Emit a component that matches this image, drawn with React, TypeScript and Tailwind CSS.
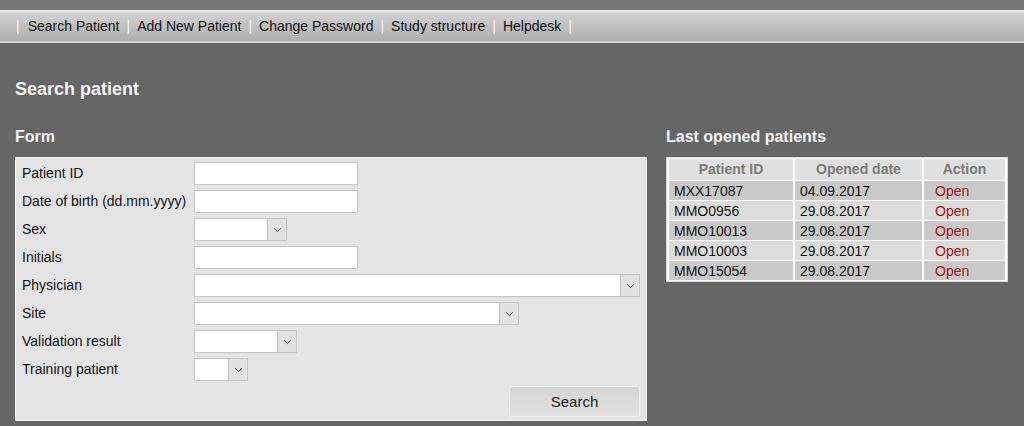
import { ReactNode } from "react";

const navItems = ["Search Patient", "Add New Patient", "Change Password", "Study structure", "Helpdesk"];

const recent = [
  { id: "MXX17087", date: "04.09.2017" },
  { id: "MMO0956", date: "29.08.2017" },
  { id: "MMO10013", date: "29.08.2017" },
  { id: "MMO10003", date: "29.08.2017" },
  { id: "MMO15054", date: "29.08.2017" },
];

function Chevron() {
  return (
    <svg width="9" height="6" viewBox="0 0 9 6" fill="none">
      <path d="M1 1.2 L4.5 4.6 L8 1.2" stroke="#555" strokeWidth="1" />
    </svg>
  );
}

function TextField({ width }: { width: string }) {
  return <div className={`h-[23px] ${width} bg-white border border-[#c6c6c6]`} />;
}

function SelectField({ width }: { width: string }) {
  return (
    <div className={`h-[23px] ${width} flex bg-white border border-[#c6c6c6]`}>
      <div className="flex-1" />
      <div className="w-[19px] flex items-center justify-center bg-[#e2e2e2] border-l border-[#bdbdbd]">
        <Chevron />
      </div>
    </div>
  );
}

function Row({ label, children }: { label: string; children: ReactNode }) {
  return (
    <div className="h-[28px] flex items-center pt-[1px]">
      <div className="w-[172px] shrink-0 text-[14px] text-[#111]">{label}</div>
      {children}
    </div>
  );
}

export default function App() {
  return (
    <div className="min-h-[426px] pt-[10px] font-['Liberation_Sans',Arial,sans-serif] bg-[linear-gradient(#777777_0,#777777_10px,#666666_10px)]">
      {/* Top nav */}
      <nav className="h-[33px] border-t-2 border-b-2 border-t-[#e9e9e9] border-b-[#d2d2d2] bg-[linear-gradient(#d3d3d3,#adadad)] flex items-center pl-[16px] text-[14px] text-[#111]">
        <span className="text-[#f4f4f4] mr-[8px]">|</span>
        {navItems.map((item) => (
          <span key={item} className="flex items-center">
            <span>{item}</span>
            <span className="text-[#f4f4f4] mx-[7px]">|</span>
          </span>
        ))}
      </nav>

      <div className="px-[15px]">
        <h1 className="text-[18px] font-bold text-[#f4f4f4] mt-[36px] leading-[20px]">Search patient</h1>

        <div className="flex gap-[19px] mt-[28px]">
          {/* Form */}
          <div className="w-[632px]">
            <h2 className="text-[16px] font-bold text-[#f4f4f4] leading-[20px]">Form</h2>
            <div className="mt-[10px] bg-[#e4e4e4] border border-[#f4f4f4] pl-[6px] pr-[6px] pt-[1px] pb-[3px]">
              <Row label="Patient ID">
                <TextField width="w-[164px]" />
              </Row>
              <Row label="Date of birth (dd.mm.yyyy)">
                <TextField width="w-[164px]" />
              </Row>
              <Row label="Sex">
                <SelectField width="w-[93px]" />
              </Row>
              <Row label="Initials">
                <TextField width="w-[164px]" />
              </Row>
              <Row label="Physician">
                <SelectField width="w-[447px]" />
              </Row>
              <Row label="Site">
                <SelectField width="w-[325px]" />
              </Row>
              <Row label="Validation result">
                <SelectField width="w-[103px]" />
              </Row>
              <Row label="Training patient">
                <SelectField width="w-[54px]" />
              </Row>
              <div className="flex justify-end mt-[3px]">
                <button className="w-[131px] h-[31px] pt-[2px] rounded-[3px] border border-[#f0f0f0] bg-[linear-gradient(#d6d6d6,#e0e0e0)] text-[15px] text-[#1a1a1a]">
                  Search
                </button>
              </div>
            </div>
          </div>

          {/* Last opened */}
          <div className="w-[342px]">
            <h2 className="text-[16px] font-bold text-[#f4f4f4] leading-[20px]">Last opened patients</h2>
            <table className="mt-[10px] w-[342px] bg-white border-separate border-spacing-x-[2px] border-spacing-y-[1px] border border-[#d8d8d8] text-[14px]">
              <thead>
                <tr className="h-[19px] bg-[#e0e0e0] text-[#7a7a7a] font-bold">
                  <th className="w-[124px] p-0 font-bold">Patient ID</th>
                  <th className="w-[127px] p-0 font-bold">Opened date</th>
                  <th className="p-0 font-bold">Action</th>
                </tr>
              </thead>
              <tbody>
                {recent.map((r, i) => (
                  <tr key={r.id} className={`h-[19px] leading-[18px] ${i % 2 === 0 ? "bg-[#c9c9c9]" : "bg-[#dcdcdc]"} text-[#111]`}>
                    <td className="pl-[5px] p-0">{r.id}</td>
                    <td className="pl-[5px] p-0">{r.date}</td>
                    <td className="pl-[11px] p-0 text-[#a01414]">Open</td>
                  </tr>
                ))}
              </tbody>
            </table>
          </div>
        </div>
      </div>
    </div>
  );
}
